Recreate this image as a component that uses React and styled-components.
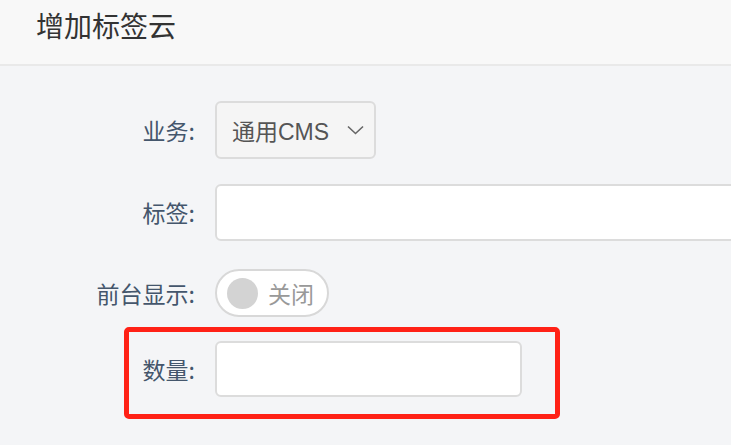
import styled, { createGlobalStyle } from "styled-components";

const GlobalStyle = createGlobalStyle`
  body {
    margin: 0;
    background: #f4f5f7;
    font-family: "Noto Sans CJK SC", "Noto Sans", sans-serif;
  }
`;

const Page = styled.div`
  width: 731px;
  height: 445px;
  overflow: hidden;
  background: #f4f5f7;
`;

const Header = styled.div`
  height: 66px;
  padding: 6px 0 0 36px;
  box-sizing: border-box;
  background: #f8f8f8;
  border-bottom: 2px solid #e9e9e9;
`;

const Title = styled.h1`
  margin: 0;
  font-size: 28px;
  line-height: 39px;
  font-weight: 400;
  color: #333;
`;

const Form = styled.div`
  padding-top: 35px;
`;

const Row = styled.div`
  position: relative;
  display: flex;
  align-items: center;
  height: ${(p) => p.h || 58}px;
  margin-bottom: ${(p) => p.mb ?? 25}px;
`;

const Label = styled.label`
  flex-shrink: 0;
  width: 215px;
  padding-right: 20px;
  box-sizing: border-box;
  text-align: right;
  font-size: 23px;
  color: #44566c;
  white-space: nowrap;
`;

const Select = styled.div`
  width: 161px;
  height: 58px;
  box-sizing: border-box;
  display: flex;
  align-items: center;
  justify-content: space-between;
  padding: 0 10px 0 15px;
  background: #f5f5f5;
  border: 2px solid #dcdcdc;
  border-radius: 6px;
  font-family: "Liberation Sans", "Noto Sans CJK SC", sans-serif;
  font-size: 23px;
  color: #555;
`;

const Input = styled.input`
  width: ${(p) => p.w}px;
  height: ${(p) => p.hgt || 57}px;
  box-sizing: border-box;
  flex-shrink: 0;
  background: #fff;
  border: 2px solid #dcdcdc;
  border-radius: 6px;
  outline: none;
`;

const Switch = styled.div`
  width: 114px;
  height: 48px;
  box-sizing: border-box;
  display: flex;
  align-items: center;
  gap: 10px;
  padding-left: 10px;
  background: #fff;
  border: 2px solid #d8d8d8;
  border-radius: 24px;
  font-size: 23px;
  color: #999;
`;

const Knob = styled.span`
  width: 31px;
  height: 31px;
  border-radius: 50%;
  background: #d3d3d3;
`;

const Highlight = styled.div`
  position: absolute;
  left: 124px;
  top: -14px;
  width: 436px;
  height: 92px;
  box-sizing: border-box;
  border: 5px solid #ff2116;
  border-radius: 5px;
  pointer-events: none;
`;

const Chevron = () => (
  <svg width="17" height="10" viewBox="0 0 17 10">
    <polyline points="1,1.5 8.5,8.5 16,1.5" fill="none" stroke="#666" strokeWidth="1.6" />
  </svg>
);

export default function App() {
  return (
    <Page>
      <GlobalStyle />
      <Header>
        <Title>增加标签云</Title>
      </Header>
      <Form>
        <Row>
          <Label>业务:</Label>
          <Select>
            <span>通用CMS</span>
            <Chevron />
          </Select>
        </Row>
        <Row h={56}>
          <Label>标签:</Label>
          <Input w={560} />
        </Row>
        <Row h={56} mb={20}>
          <Label>前台显示:</Label>
          <Switch>
            <Knob />
            <span>关闭</span>
          </Switch>
        </Row>
        <Row h={56}>
          <Label>数量:</Label>
          <Input w={307} hgt={56} />
          <Highlight />
        </Row>
      </Form>
    </Page>
  );
}
